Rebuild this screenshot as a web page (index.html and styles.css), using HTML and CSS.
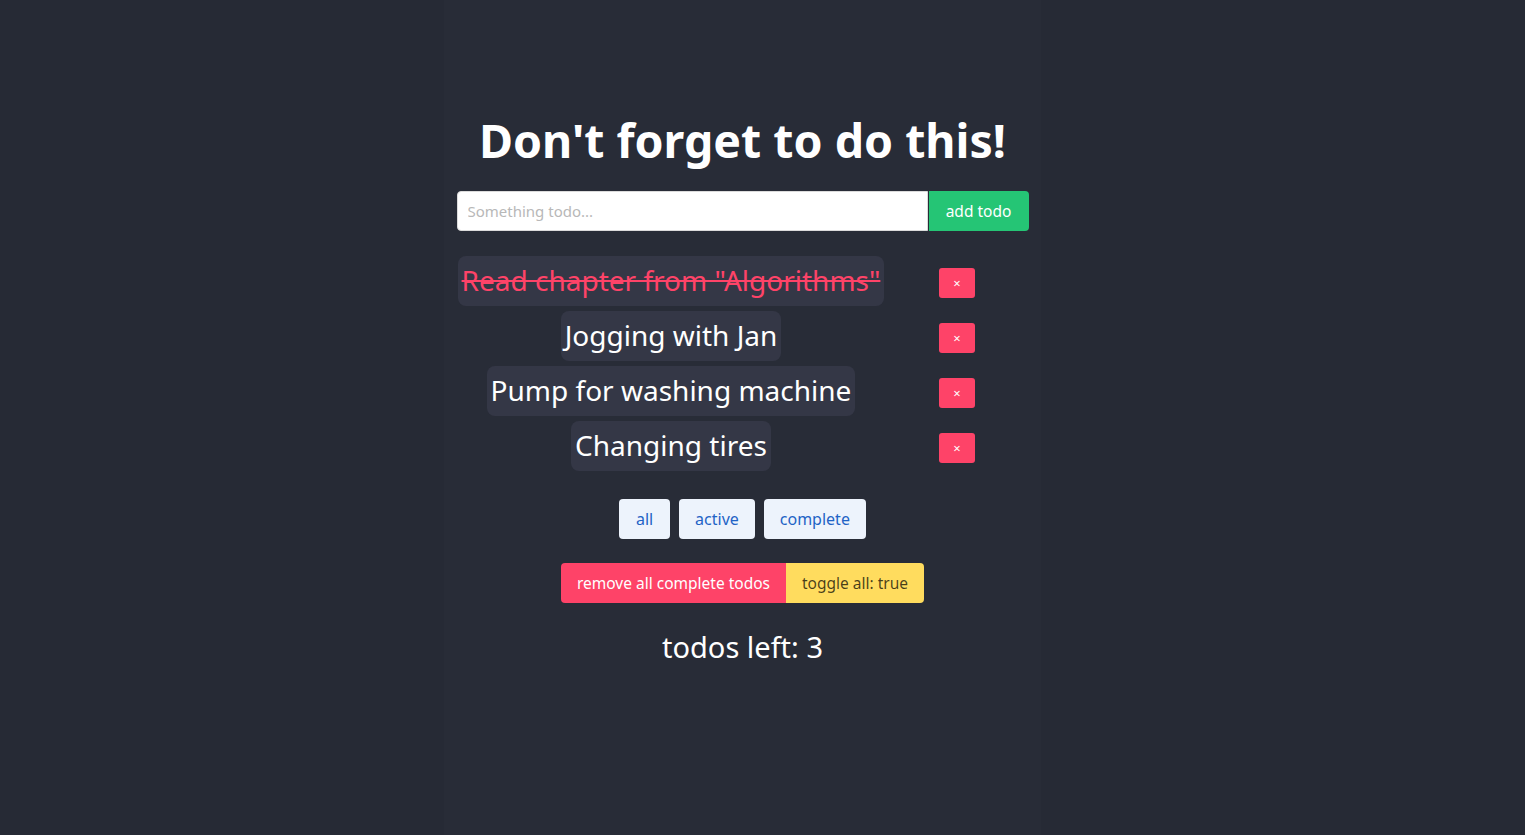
FILE: index.html
```html
<!DOCTYPE html>
<html lang="en">
<head>
<meta charset="utf-8">
<title>Todos</title>
<link rel="stylesheet" href="styles.css">
</head>
<body>
<div class="page">
  <main class="container">
    <h1 class="title">Don't forget to do this!</h1>
    <form class="add-form">
      <input class="add-input" type="text" placeholder="Something todo...">
      <button class="btn btn-success" type="button">add todo</button>
    </form>
    <ul class="todo-list">
      <li class="todo-row">
        <div class="todo-col"><span class="todo-text done">Read chapter from "Algorithms"</span></div>
        <div class="del-col"><button class="del-btn" type="button">×</button></div>
      </li>
      <li class="todo-row">
        <div class="todo-col"><span class="todo-text">Jogging with Jan</span></div>
        <div class="del-col"><button class="del-btn" type="button">×</button></div>
      </li>
      <li class="todo-row">
        <div class="todo-col"><span class="todo-text">Pump for washing machine</span></div>
        <div class="del-col"><button class="del-btn" type="button">×</button></div>
      </li>
      <li class="todo-row">
        <div class="todo-col"><span class="todo-text">Changing tires</span></div>
        <div class="del-col"><button class="del-btn" type="button">×</button></div>
      </li>
    </ul>
    <div class="filters">
      <button class="btn btn-light" type="button">all</button>
      <button class="btn btn-light" type="button">active</button>
      <button class="btn btn-light" type="button">complete</button>
    </div>
    <div class="actions">
      <button class="btn btn-danger" type="button">remove all complete todos</button>
      <button class="btn btn-warning" type="button">toggle all: true</button>
    </div>
    <p class="left">todos left: 3</p>
  </main>
</div>
</body>
</html>
```

FILE: styles.css
```css
* { box-sizing: border-box; }
html, body { margin: 0; height: 100%; }
body {
  background: #262a35;
  font-family: "Noto Sans", "Open Sans", sans-serif;
  color: #fff;
}
.page {
  display: flex;
  justify-content: center;
  padding-right: 41px;
  min-height: 100%;
}
.container {
  width: 597px;
  min-height: 835px;
  background: #282c37;
  padding: 110px 12px 0 13px;
  display: flex;
  flex-direction: column;
  align-items: stretch;
}
.title {
  margin: 0 0 2px;
  font-size: 46.5px;
  font-weight: 700;
  line-height: 60px;
  text-align: center;
}
.add-form {
  display: flex;
  margin-top: 19px;
  height: 40px;
}
.add-input {
  flex: 1;
  height: 40px;
  border: 1px solid #dbdbdb;
  border-radius: 4px 0 0 4px;
  padding: 0 10px;
  font: inherit;
  font-size: 15px;
  color: #363636;
  outline: none;
  margin-right: 1px;
}
.add-input::placeholder { color: #b8b8b8; }
.btn {
  font-family: inherit;
  font-size: 16px;
  height: 40px;
  border: none;
  border-radius: 4px;
  padding: 0 16px;
  cursor: pointer;
  line-height: 38px;
}
.add-form .btn { border-radius: 0 4px 4px 0; width: 100px; padding: 0; font-size: 15.5px; }
.btn-success { background: #25c575; color: #fff; }
.btn-light { background: #edf3fc; color: #1f63c6; }
.btn-danger { background: #fe4368; color: #fff; }
.btn-warning { background: #ffdc5e; color: rgba(0,0,0,0.72); }
.todo-list {
  list-style: none;
  margin: 25px 0 0;
  padding: 0;
  display: flex;
  flex-direction: column;
  gap: 5px;
}
.todo-row {
  display: flex;
  align-items: center;
}
.todo-col {
  width: 75%;
  display: flex;
  justify-content: center;
}
.del-col {
  width: 25%;
  display: flex;
  justify-content: center;
  padding-top: 4px;
}
.todo-text {
  display: inline-block;
  background: #343746;
  border-radius: 8px;
  padding: 3px 4px 5px;
  font-size: 28px;
  line-height: 42px;
  white-space: nowrap;
}
.todo-text.done {
  color: #fe4368;
  text-decoration: line-through;
}
.del-btn {
  width: 36px;
  height: 30px;
  border: none;
  border-radius: 3px;
  background: #fe4368;
  color: #fff;
  font-size: 13px;
  padding: 0;
  font-family: inherit;
}
.filters {
  display: flex;
  justify-content: center;
  gap: 9px;
  margin-top: 28px;
}
.filters .btn:first-child { width: 51px; padding: 0; }
.actions {
  display: flex;
  justify-content: center;
  margin-top: 24px;
}
.actions .btn { font-size: 15.5px; }
.actions .btn-danger { border-radius: 4px 0 0 4px; }
.actions .btn-warning { border-radius: 0 4px 4px 0; }
.left {
  margin: 26px 0 0;
  text-align: center;
  font-size: 29px;
  line-height: 36px;
}
```
